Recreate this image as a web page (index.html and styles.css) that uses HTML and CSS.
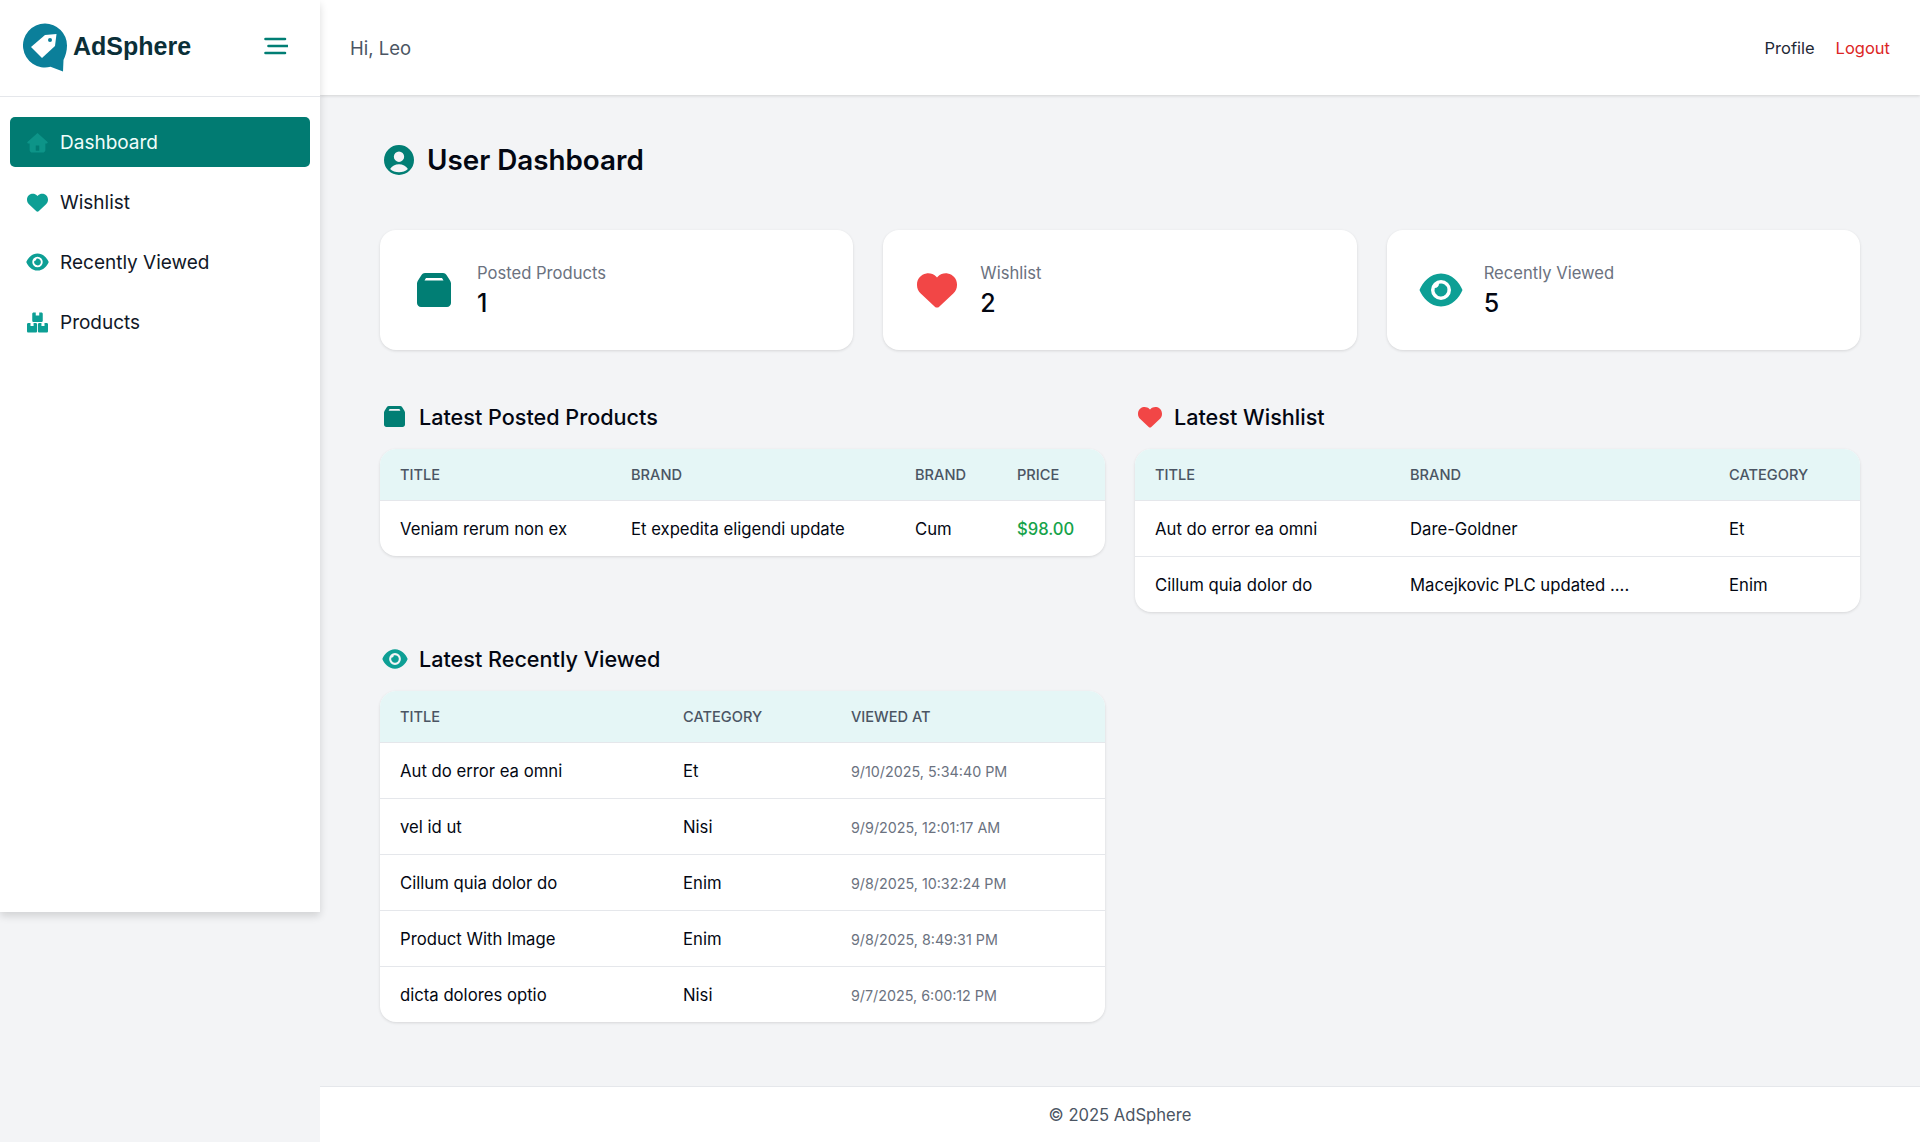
FILE: index.html
```html
<!DOCTYPE html>
<html lang="en">
<head>
<meta charset="utf-8">
<title>AdSphere</title>
<link rel="stylesheet" href="styles.css">
</head>
<body>
<svg class="defs" width="0" height="0" aria-hidden="true">
  <defs>
    <symbol id="i-heart" viewBox="0 0 512 512"><path d="M47.6 300.4L228.3 469.1c7.5 7 17.4 10.9 27.7 10.9s20.2-3.9 27.7-10.9L464.4 300.4c30.4-28.3 47.6-68 47.6-109.5v-5.8c0-69.9-50.5-129.5-119.4-141C347 36.5 300.6 51.4 268 84L256 96 244 84c-32.6-32.6-79-47.5-124.6-39.9C50.5 55.6 0 115.2 0 185.1v5.8c0 41.5 17.2 81.2 47.6 109.5z"/></symbol>
    <symbol id="i-eye" viewBox="0 0 44 34"><path fill-rule="evenodd" d="M22 .5C11 .5 3.500 9.500 .5 17 3.500 24.500 11 33.500 22 33.500S40.500 24.500 43.500 17C40.500 9.500 33 .5 22 .5zM22 7a10 10 0 1 1 0 20 10 10 0 0 1 0-20z"/><path d="M20 10.800A6.500 6.500 0 1 1 15.800 15c2.400 0 4.200-1.800 4.200-4.200z"/></symbol>
    <symbol id="i-box" viewBox="0 0 34 34"><path fill-rule="evenodd" d="M8 0h18c1.500 0 2.700.7 3.500 2L33 7.500c.6.900 1 2 1 3V30c0 2.200-1.800 4-4 4H4c-2.200 0-4-1.800-4-4V10.500c0-1 .4-2.100 1-3L4.500 2C5.300.7 6.500 0 8 0zm-.5 7.500h19l-1.500-2.500H9z"/></symbol>
  </defs>
</svg>
<div class="app">
  <aside class="sidebar">
    <div class="brand">
      <div class="logo">
        <svg class="logo-mark" viewBox="0 0 45 49"><path fill="#0b7f9a" d="M22 .5a22 22 0 0 1 22 22c0 5.500-1.500 10.500-3.500 14.500l-.5 11.500-12.500-4.700A22 22 0 1 1 22 .5z"/><path fill="#fff" d="M8 24 22 12l11.500-1L32 23 19 35z"/><circle cx="27" cy="17" r="2" fill="#0b7f9a"/></svg>
        <span class="logo-text">AdSphere</span>
      </div>
      <svg class="burger" viewBox="0 0 24 18"><path d="M1.500 2H21M4.500 9H23.500M1.500 16H21"/></svg>
    </div>
    <nav class="nav">
      <a class="nav-item active">
        <svg class="nav-icon" viewBox="0 0 24 24"><path fill-rule="evenodd" d="M12 1 23.500 11.500c.4.500.2 1.500-.8 1.500H21v7.500c0 1.700-1.300 3-3 3H6c-1.700 0-3-1.300-3-3V13H1.300c-1 0-1.200-1-.8-1.500zM10 15.500v6h4v-6z"/></svg>
        <span>Dashboard</span>
      </a>
      <a class="nav-item">
        <svg class="nav-icon"><use href="#i-heart"/></svg>
        <span>Wishlist</span>
      </a>
      <a class="nav-item">
        <svg class="nav-icon nav-eye"><use href="#i-eye"/></svg>
        <span>Recently Viewed</span>
      </a>
      <a class="nav-item">
        <svg class="nav-icon" viewBox="0 0 24 24"><path fill-rule="evenodd" d="M7.500 0.500H10v3.500h4V0.500h2.500c.8 0 1.500.7 1.500 1.500V10c0 .8-.7 1.500-1.500 1.500h-9C6.700 11.500 6 10.800 6 10V2C6 1.200 6.700 0.500 7.500 0.500zM1.500 12.500H4v3.500h3.500v-3.500H10c.8 0 1.500.7 1.500 1.500v8c0 .8-.7 1.500-1.500 1.500H1.500C.7 23.500 0 22.800 0 22V14c0-.8.7-1.500 1.500-1.500zM14 12.500h2.500V16H20v-3.500h2.500c.8 0 1.500.7 1.500 1.500v8c0 .8-.7 1.500-1.500 1.500H14c-.8 0-1.500-.7-1.500-1.500V14c0-.8.7-1.500 1.500-1.500z"/></svg>
        <span>Products</span>
      </a>
    </nav>
  </aside>
  <div class="main">
    <header class="topbar">
      <span class="greeting">Hi, Leo</span>
      <div class="top-links">
        <a class="top-link">Profile</a>
        <a class="top-link danger">Logout</a>
      </div>
    </header>
    <main class="content">
      <h1 class="page-title">
        <svg class="title-icon" viewBox="0 0 32 32"><path fill-rule="evenodd" d="M16 0a16 16 0 1 1 0 32 16 16 0 0 1 0-32zm0 7a5.500 5.500 0 1 0 0 11 5.500 5.500 0 0 0 0-11zm0 13.500c-4 0-7.500 1.800-9.500 5 2.500 2.500 5.800 3.500 9.500 3.500s7-1 9.500-3.500c-2-3.200-5.500-5-9.500-5z"/></svg>
        User Dashboard
      </h1>
      <section class="stats">
        <div class="stat">
          <svg class="stat-icon teal"><use href="#i-box"/></svg>
          <div><div class="stat-label">Posted Products</div><div class="stat-value">1</div></div>
        </div>
        <div class="stat">
          <svg class="stat-icon red stat-heart"><use href="#i-heart"/></svg>
          <div><div class="stat-label">Wishlist</div><div class="stat-value">2</div></div>
        </div>
        <div class="stat">
          <svg class="stat-icon aqua stat-eye"><use href="#i-eye"/></svg>
          <div><div class="stat-label">Recently Viewed</div><div class="stat-value">5</div></div>
        </div>
      </section>
      <section class="lists">
        <div class="list">
          <h2 class="list-title"><svg class="list-icon teal"><use href="#i-box"/></svg>Latest Posted Products</h2>
          <div class="card">
            <table>
              <colgroup><col class="c231"><col class="c284"><col class="c102"><col></colgroup>
              <thead><tr><th>Title</th><th>Brand</th><th>Brand</th><th>Price</th></tr></thead>
              <tbody>
                <tr><td>Veniam rerum non ex</td><td>Et expedita eligendi update</td><td>Cum</td><td class="price">$98.00</td></tr>
              </tbody>
            </table>
          </div>
        </div>
        <div class="list">
          <h2 class="list-title"><svg class="list-icon red list-heart"><use href="#i-heart"/></svg>Latest Wishlist</h2>
          <div class="card">
            <table>
              <colgroup><col class="c255"><col class="c319"><col></colgroup>
              <thead><tr><th>Title</th><th>Brand</th><th>Category</th></tr></thead>
              <tbody>
                <tr><td>Aut do error ea omni</td><td>Dare-Goldner</td><td>Et</td></tr>
                <tr><td>Cillum quia dolor do</td><td>Macejkovic PLC updated ....</td><td>Enim</td></tr>
              </tbody>
            </table>
          </div>
        </div>
        <div class="list">
          <h2 class="list-title"><svg class="list-icon aqua list-eye"><use href="#i-eye"/></svg>Latest Recently Viewed</h2>
          <div class="card">
            <table>
              <colgroup><col class="c283"><col class="c168"><col></colgroup>
              <thead><tr><th>Title</th><th>Category</th><th>Viewed At</th></tr></thead>
              <tbody>
                <tr><td>Aut do error ea omni</td><td>Et</td><td class="when">9/10/2025, 5:34:40 PM</td></tr>
                <tr><td>vel id ut</td><td>Nisi</td><td class="when">9/9/2025, 12:01:17 AM</td></tr>
                <tr><td>Cillum quia dolor do</td><td>Enim</td><td class="when">9/8/2025, 10:32:24 PM</td></tr>
                <tr><td>Product With Image</td><td>Enim</td><td class="when">9/8/2025, 8:49:31 PM</td></tr>
                <tr><td>dicta dolores optio</td><td>Nisi</td><td class="when">9/7/2025, 6:00:12 PM</td></tr>
              </tbody>
            </table>
          </div>
        </div>
      </section>
    </main>
    <footer class="footer">© 2025 AdSphere</footer>
  </div>
</div>
</body>
</html>
```
FILE: styles.css
```css
* { box-sizing: border-box; }
html, body { margin: 0; height: 100%; }
body {
  background: #f3f4f6;
  color: #030712;
  font-family: Inter, "Liberation Sans", sans-serif;
  font-size: 16px;
  overflow: hidden;
}
.defs { display: block; height: 0; }
svg { fill: currentColor; flex: none; }
.teal { color: #017e74; }
.red { color: #f24646; }
.aqua { color: #0d9f95; }

.app { display: flex; height: 1142px; align-items: flex-start; }

.sidebar {
  width: 320px;
  height: 912px;
  background: #fff;
  flex: none;
  box-shadow: 0 4px 8px rgba(0, 0, 0, .14);
  position: relative;
  z-index: 2;
}
.brand {
  height: 97px;
  border-bottom: 1px solid #e5e7eb;
  display: flex;
  align-items: center;
  justify-content: space-between;
  padding: 0 32px 2px 23px;
}
.logo { display: flex; align-items: center; gap: 5px; }
.logo-mark { width: 45px; height: 49px; margin-top: 1px; }
.logo-text {
  font-family: "Liberation Sans", Arial, sans-serif;
  font-size: 25px;
  font-weight: 700;
  color: #0b2f38;
  margin-top: -2px;
}
.burger { width: 24px; height: 18px; fill: none; stroke: #017e74; stroke-width: 2.6; stroke-linecap: round; margin-top: -2px; }

.nav { display: flex; flex-direction: column; gap: 10px; padding: 20px 10px; }
.nav-item {
  height: 50px;
  display: flex;
  align-items: center;
  gap: 12px;
  padding: 0 17px;
  border-radius: 5px;
  font-size: 19px;
  color: #111827;
}
.nav-item.active { background: #017b72; color: #f0fdfa; }
.nav-icon { width: 21px; height: 21px; color: #0d9f95; }
.nav-eye { width: 23px; height: 18px; margin: 0 -1px; }
.active .nav-icon { color: #0d9488; }

.main { flex: 1; min-width: 0; height: 100%; display: flex; flex-direction: column; }
.topbar {
  height: 95px;
  flex: none;
  background: #fff;
  box-shadow: 0 1px 3px rgba(0, 0, 0, .14);
  display: flex;
  align-items: center;
  justify-content: space-between;
  padding: 0 30px;
  position: relative;
}
.greeting { font-size: 18.5px; color: #4b5563; }
.top-links { display: flex; gap: 21px; font-size: 16.5px; }
.top-link { color: #1f2937; }
.danger { color: #dc2626; }

.content { flex: 1; padding: 47px 60px 0; }
.page-title {
  margin: 0 0 52px;
  height: 36px;
  display: flex;
  align-items: center;
  gap: 13px;
  font-size: 27.8px;
  line-height: 36px;
  font-weight: 600;
  color: #030712;
  padding-left: 4px;
}
.title-icon { width: 30px; height: 30px; color: #017e74; }

.stats { display: grid; grid-template-columns: repeat(3, 1fr); gap: 30px; }
.stat {
  height: 120px;
  background: #fff;
  border-radius: 16px;
  box-shadow: 0 1px 3px rgba(0, 0, 0, .12);
  display: flex;
  align-items: center;
  gap: 26px;
  padding: 0 37px;
}
.stat-icon { width: 34px; height: 34px; }
.stat-heart { width: 40px; height: 40px; margin: 0 -3px; }
.stat-eye { width: 44px; height: 34px; margin: 0 -5px; }
.stat-label { font-size: 16.6px; line-height: 24px; color: #6b7280; }
.stat-value { font-size: 25px; line-height: 32px; font-weight: 500; margin-top: 2px; color: #030712; }

.lists { display: grid; grid-template-columns: repeat(2, 1fr); gap: 30px; margin-top: 50px; align-items: start; }
.list-title {
  margin: 0 0 16px;
  height: 33px;
  display: flex;
  align-items: center;
  gap: 14px;
  font-size: 21.6px;
  font-weight: 500;
  color: #030712;
  padding-left: 4px;
}
.list-icon { width: 21px; height: 21px; }
.list-heart { width: 24px; height: 24px; margin: 0 -1.5px; }
.list-eye { width: 26px; height: 20px; margin: 0 -2.5px; }

.card { background: #fff; border-radius: 16px; box-shadow: 0 1px 3px rgba(0, 0, 0, .12); overflow: hidden; }
table { width: 100%; border-collapse: collapse; table-layout: fixed; }
.c231 { width: 231px; } .c284 { width: 284px; } .c102 { width: 102px; }
.c255 { width: 255px; } .c319 { width: 319px; }
.c283 { width: 283px; } .c168 { width: 168px; }
th {
  height: 51px;
  background: #e5f6f6;
  padding: 2px 20px 0;
  text-align: left;
  text-transform: uppercase;
  font-size: 14.6px;
  font-weight: 500;
  color: #4b5563;
  border-bottom: 1px solid #e5e7eb;
}
td {
  height: 56px;
  padding: 2px 20px 0;
  font-size: 16.7px;
  color: #030712;
  border-bottom: 1px solid #e5e7eb;
  white-space: nowrap;
}
tbody tr:last-child td { border-bottom: 0; }
.price { color: #16a34a; font-size: 16.6px; font-weight: 500; }
.when { color: #6b7280; font-size: 14.3px; }

.footer {
  height: 56px;
  flex: none;
  background: #fff;
  border-top: 1px solid #e5e7eb;
  display: flex;
  align-items: center;
  justify-content: center;
  font-size: 16.6px;
  color: #4b5563;
}
```
